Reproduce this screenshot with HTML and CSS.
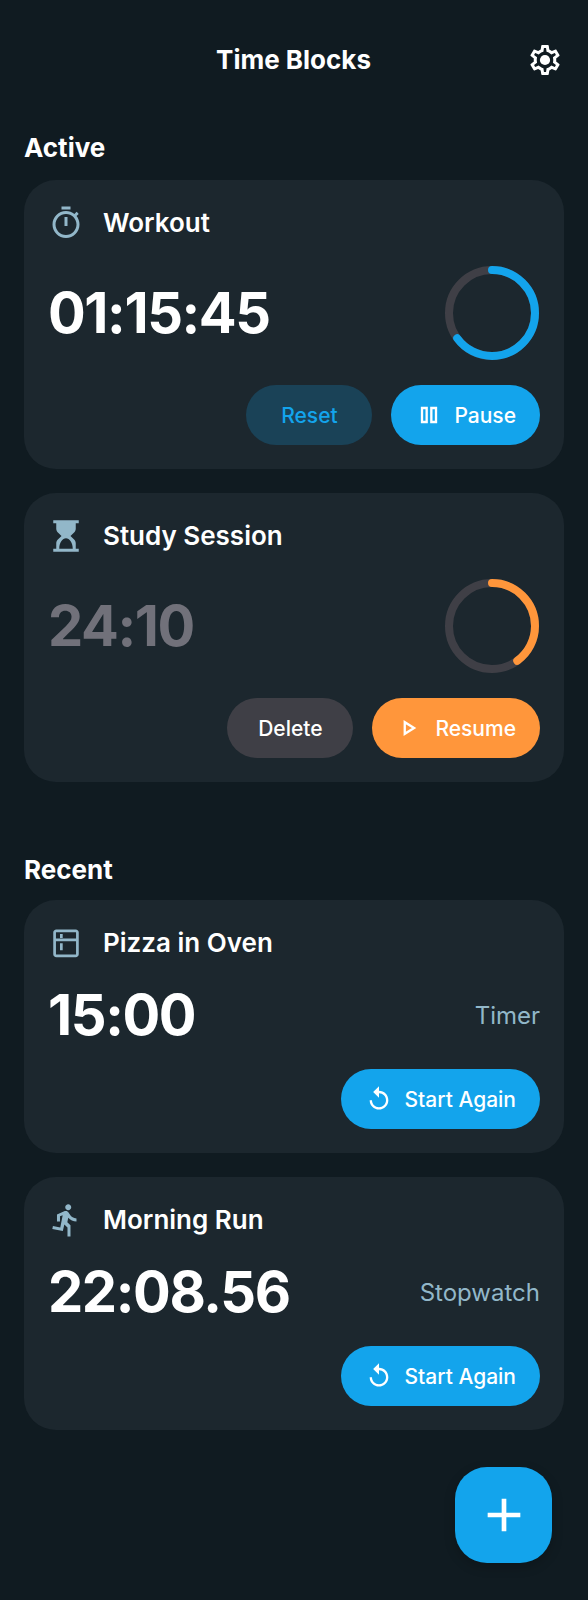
FILE: index.html
```html
<!DOCTYPE html>
<html>
<head>
  <title>Time Blocks</title>
  <meta name="viewport" content="width=device-width, initial-scale=1">
  <link rel="stylesheet" href="styles.css">
</head>
<body>
  <div class="page">
    <header class="top">
      <span></span>
      <h1>Time Blocks</h1>
      <svg class="gear" viewBox="0 0 24 24"><path d="M19.43 12.98c.04-.32.07-.64.07-.98 0-.34-.03-.66-.07-.98l2.11-1.65c.19-.15.24-.42.12-.64l-2-3.46c-.09-.16-.26-.25-.44-.25-.06 0-.12.01-.17.03l-2.49 1c-.52-.4-1.08-.73-1.69-.98l-.38-2.65C14.46 2.18 14.25 2 14 2h-4c-.25 0-.46.18-.49.42l-.38 2.65c-.61.25-1.17.59-1.69.98l-2.49-1c-.06-.02-.12-.03-.18-.03-.17 0-.34.09-.43.25l-2 3.46c-.13.22-.07.49.12.64l2.11 1.65c-.04.32-.07.65-.07.98 0 .33.03.66.07.98l-2.11 1.65c-.19.15-.24.42-.12.64l2 3.46c.09.16.26.25.44.25.06 0 .12-.01.17-.03l2.49-1c.52.4 1.08.73 1.69.98l.38 2.65c.03.24.24.42.49.42h4c.25 0 .46-.18.49-.42l.38-2.65c.61-.25 1.17-.59 1.69-.98l2.49 1c.06.02.12.03.18.03.17 0 .34-.09.43-.25l2-3.46c.12-.22.07-.49-.12-.64l-2.11-1.65zm-1.98-1.71c.04.31.05.52.05.73 0 .21-.02.43-.05.73l-.14 1.13.89.7 1.08.84-.7 1.21-1.27-.51-1.04-.42-.9.68c-.43.32-.84.56-1.25.73l-1.06.43-.16 1.13-.2 1.35h-1.4l-.19-1.35-.16-1.13-1.06-.43c-.43-.18-.83-.41-1.23-.71l-.91-.7-1.06.43-1.27.51-.7-1.21 1.08-.84.89-.7-.14-1.13c-.03-.31-.05-.54-.05-.74s.02-.43.05-.73l.14-1.13-.89-.7-1.08-.84.7-1.21 1.27.51 1.04.42.9-.68c.43-.32.84-.56 1.25-.73l1.06-.43.16-1.13.2-1.35h1.39l.19 1.35.16 1.13 1.06.43c.43.18.83.41 1.23.71l.91.7 1.06-.43 1.27-.51.7 1.21-1.07.85-.89.7.14 1.13z"/><circle cx="12" cy="12" r="3.4"/></svg>
    </header>

    <h2 class="section active-title">Active</h2>

    <div class="card">
      <div class="card-head">
        <svg class="task-icon" viewBox="0 0 24 24"><path d="M9 1h6v2H9zM19.03 7.39l1.42-1.42c-.43-.51-.9-.99-1.41-1.41l-1.42 1.42C16.07 4.74 14.12 4 12 4c-4.97 0-9 4.03-9 9s4.02 9 9 9 9-4.03 9-9c0-2.12-.74-4.07-1.97-5.61zM12 20c-3.87 0-7-3.13-7-7s3.13-7 7-7 7 3.13 7 7-3.13 7-7 7zM11 8h2v6h-2z"/></svg>
        <span class="task-name">Workout</span>
      </div>
      <div class="card-row big-row">
        <span class="time">01:15:45</span>
        <svg class="ring" viewBox="0 0 96 96">
          <circle class="ring-track" cx="48" cy="48" r="43"/>
          <circle class="ring-value blue" cx="48" cy="48" r="43" pathLength="100" stroke-dasharray="65 100"/>
        </svg>
      </div>
      <div class="actions">
        <button class="btn fixed reset">Reset</button>
        <button class="btn primary">
          <svg class="btn-icon" viewBox="0 0 24 24"><path class="outline" d="M6 6h4v12H6zM14 6h4v12h-4z"/></svg>
          Pause
        </button>
      </div>
    </div>

    <div class="card">
      <div class="card-head">
        <svg class="task-icon" viewBox="0 0 24 24"><path fill-rule="evenodd" d="M3.5 1.5h17v2h-2v3.6c0 1-.4 1.9-1.1 2.6L15 12l2.4 2.3c.7.7 1.1 1.6 1.1 2.6v3.6h2v2h-17v-2h2v-3.6c0-1 .4-1.9 1.1-2.6L9 12 6.600 9.700c-.7-.7-1.100-1.600-1.100-2.600V3.500h-2zM12 13.500c-2.300 0-4.500 2.800-4.500 7h9c0-4.200-2.200-7-4.500-7z"/></svg>
        <span class="task-name">Study Session</span>
      </div>
      <div class="card-row big-row">
        <span class="time dim">24:10</span>
        <svg class="ring" viewBox="0 0 96 96">
          <circle class="ring-track" cx="48" cy="48" r="43"/>
          <circle class="ring-value orange" cx="48" cy="48" r="43" pathLength="100" stroke-dasharray="40 100"/>
        </svg>
      </div>
      <div class="actions">
        <button class="btn fixed delete">Delete</button>
        <button class="btn resume">
          <svg class="btn-icon" viewBox="0 0 24 24"><path class="outline" d="M7.500 7v10l8-5z"/></svg>
          Resume
        </button>
      </div>
    </div>

    <h2 class="section recent-title">Recent</h2>

    <div class="card">
      <div class="card-head">
        <svg class="task-icon" viewBox="0 0 24 24"><path fill-rule="evenodd" d="M5.500 3h13c1.100 0 2 .9 2 2v14.500c0 1.100-.9 2-2 2h-13c-1.100 0-2-.9-2-2V5c0-1.100.9-2 2-2zm0 1.800c-.1 0-.2.1-.2.2v4h13.400V5c0-.1-.1-.2-.2-.2zm-.2 6v8.700c0 .1.1.2.2.2h13c.1 0 .2-.1.2-.2v-8.700zM8 6h1.800v2.600H8zm0 6.200h1.800v4.600H8z"/></svg>
        <span class="task-name">Pizza in Oven</span>
      </div>
      <div class="card-row">
        <span class="time">15:00</span>
        <span class="kind">Timer</span>
      </div>
      <div class="actions">
        <button class="btn primary">
          <svg class="btn-icon" viewBox="0 0 24 24"><path d="M12 5V1L7 6l5 5V7c3.310 0 6 2.690 6 6s-2.690 6-6 6-6-2.690-6-6H4c0 4.420 3.580 8 8 8s8-3.580 8-8-3.580-8-8-8z"/></svg>
          Start Again
        </button>
      </div>
    </div>

    <div class="card">
      <div class="card-head">
        <svg class="task-icon" viewBox="0 0 24 24"><path d="M13.490 5.480c1.100 0 2-.9 2-2s-.9-2-2-2-2 .9-2 2 .9 2 2 2zm-3.600 13.900l1-4.400 2.100 2v6h2v-7.500l-2.100-2 .6-3c1.300 1.500 3.300 2.500 5.500 2.500v-2c-1.900 0-3.500-1-4.300-2.400l-1-1.600c-.4-.6-1-1-1.700-1-.3 0-.5.1-.8.1l-5.200 2.200v4.700h2v-3.400l1.800-.7-1.600 8.100-4.900-1-.4 2 7 1.400z"/></svg>
        <span class="task-name">Morning Run</span>
      </div>
      <div class="card-row">
        <span class="time">22:08.56</span>
        <span class="kind">Stopwatch</span>
      </div>
      <div class="actions">
        <button class="btn primary">
          <svg class="btn-icon" viewBox="0 0 24 24"><path d="M12 5V1L7 6l5 5V7c3.310 0 6 2.690 6 6s-2.690 6-6 6-6-2.690-6-6H4c0 4.420 3.580 8 8 8s8-3.580 8-8-3.580-8-8-8z"/></svg>
          Start Again
        </button>
      </div>
    </div>

    <button class="fab">
      <svg viewBox="0 0 24 24"><path d="M19 13h-6v6h-2v-6H5v-2h6V5h2v6h6v2z"/></svg>
    </button>
  </div>
</body>
</html>
```

FILE: styles.css
```css
body {
  margin: 0;
  background-color: #101b21;
  color: #fff;
  font-family: Inter, "Noto Sans", sans-serif;
}
.page {
  position: relative;
  height: 1600px;
  padding: 0 24px;
  box-sizing: border-box;
  overflow: hidden;
}
.top {
  display: grid;
  grid-template-columns: 1fr auto 1fr;
  align-items: center;
  padding: 42px 1px 0 0;
}
.top h1 {
  margin: 0;
  font-size: 26px;
  line-height: 36px;
  font-weight: 700;
}
.gear {
  width: 36px;
  height: 36px;
  fill: #fff;
  justify-self: end;
}
.section {
  margin: 0;
  font-size: 26px;
  line-height: 32px;
  font-weight: 700;
}
.active-title {
  margin-top: 54px;
  margin-bottom: 16px;
}
.recent-title {
  margin-top: 72px;
  margin-bottom: 14px;
}
.card {
  background-color: #1c272e;
  border-radius: 32px;
  padding: 24px;
  margin-bottom: 24px;
}
.card-head {
  display: flex;
  align-items: center;
  gap: 19px;
  height: 37px;
}
.task-icon {
  width: 36px;
  height: 36px;
  fill: #92b7c9;
}
.task-name {
  font-size: 26px;
  font-weight: 600;
}
.card-row {
  display: flex;
  align-items: center;
  justify-content: space-between;
  margin: 20px 0;
}
.big-row {
  margin: 24px 0;
}
.time {
  font-size: 56px;
  line-height: 68px;
  font-weight: 700;
  letter-spacing: -1.4px;
}
.time.dim {
  color: #71717a;
}
.kind {
  font-size: 24px;
  color: #92b7c9;
}
.ring {
  width: 96px;
  height: 96px;
  transform: rotate(-90deg);
}
.ring circle {
  fill: none;
  stroke-width: 8;
}
.ring-track {
  stroke: #3f3f46;
}
.ring-value {
  stroke-linecap: round;
}
.ring-value.blue {
  stroke: #13a4ec;
}
.ring-value.orange {
  stroke: #ff963b;
}
.actions {
  display: flex;
  justify-content: flex-end;
  gap: 19px;
}
.btn {
  display: flex;
  align-items: center;
  justify-content: center;
  gap: 11px;
  height: 60px;
  padding: 0 24px;
  border: none;
  border-radius: 30px;
  font-family: inherit;
  font-size: 21px;
  font-weight: 500;
  color: #fff;
}
.btn.fixed {
  width: 126px;
  padding: 0;
}
.btn-icon {
  width: 28px;
  height: 28px;
  fill: #fff;
}
.outline {
  fill: none;
  stroke: #fff;
  stroke-width: 2;
}
.primary {
  background-color: #13a4ec;
}
.resume {
  background-color: #ff963b;
}
.reset {
  background-color: #1a4257;
  color: #13a4ec;
}
.delete {
  background-color: #3f3f46;
}
.fab {
  position: absolute;
  right: 36px;
  bottom: 37px;
  display: flex;
  align-items: center;
  justify-content: center;
  width: 97px;
  height: 96px;
  padding: 0;
  border: none;
  border-radius: 32px;
  background-color: #13a4ec;
  box-shadow: 0 4px 12px rgba(0, 0, 0, 0.2);
}
.fab svg {
  width: 56px;
  height: 56px;
  fill: #fff;
}
```
